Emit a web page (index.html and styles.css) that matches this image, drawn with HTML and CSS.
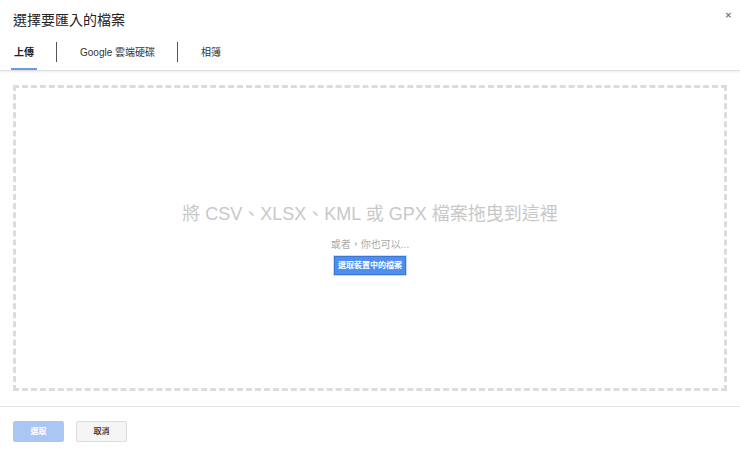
FILE: index.html
```html
<!doctype html>
<html>

<head>
    <title>選擇要匯入的檔案</title>
    <meta charset="utf-8">
    <link rel="stylesheet" href="styles.css">
</head>

<body>
    <div class="dialog">
        <div class="head">
            <h1 class="title">選擇要匯入的檔案</h1>
            <span class="close">&#x2715;</span>
            <div class="tabs">
                <span class="tab active">上傳</span>
                <span class="sep"></span>
                <span class="tab">Google 雲端硬碟</span>
                <span class="sep"></span>
                <span class="tab">相簿</span>
            </div>
        </div>
        <div class="body">
            <div class="drop">
                <div class="drop-title">將 CSV、XLSX、KML 或 GPX 檔案拖曳到這裡</div>
                <div class="drop-or">或者，你也可以...</div>
                <span class="pick">選取裝置中的檔案</span>
            </div>
        </div>
        <div class="foot">
            <span class="btn btn-primary">選取</span>
            <span class="btn">取消</span>
        </div>
    </div>
</body>

</html>
```

FILE: styles.css
```css
* {
    box-sizing: border-box;
}

body {
    margin: 0;
    background: #fff;
    font-family: "Liberation Sans", Arial, "Noto Sans CJK TC", sans-serif;
    color: #222;
}

.head {
    position: relative;
    padding: 10px 13px 0 11px;
    border-bottom: 1px solid #e0e0e0;
    box-shadow: 0 1px 2px rgba(0, 0, 0, 0.08);
}

.title {
    margin: 0 0 0 2px;
    font-size: 14px;
    line-height: 20px;
    font-weight: normal;
    color: #222;
}

.close {
    position: absolute;
    top: 11px;
    right: 8px;
    font-size: 8px;
    font-weight: bold;
    color: #777;
}

.tabs {
    display: flex;
    align-items: flex-start;
    margin-top: 13px;
}

.tab {
    font-size: 10px;
    line-height: 20px;
    padding: 0 3px 5px;
    border-bottom: 2px solid transparent;
    color: #333;
}

.tab.active {
    font-weight: bold;
    color: #222;
    border-bottom-color: #6d9be0;
}

.sep {
    width: 1px;
    height: 20px;
    margin: -1px 20px 0 19px;
    background: #555;
}

.body {
    padding: 14px 13px 15px;
}

.drop {
    height: 306px;
    border: 3px dashed #dcdcdc;
    display: flex;
    flex-direction: column;
    align-items: center;
    justify-content: center;
}

.drop-title {
    font-size: 18px;
    line-height: 24px;
    color: #c8c8c8;
}

.drop-or {
    margin-top: 12px;
    font-size: 10px;
    line-height: 14px;
    color: #aaa;
}

.pick {
    margin-top: 4px;
    width: 72px;
    height: 19px;
    line-height: 17px;
    text-align: center;
    font-size: 8px;
    font-weight: bold;
    color: #fff;
    background: #4d8ef0;
    border: 1px solid #3a75d8;
    box-shadow: 0 0 0 1px #c9dcf8;
}

.foot {
    display: flex;
    gap: 12px;
    padding: 14px 13px;
    border-top: 1px solid #e5e5e5;
}

.btn {
    width: 51px;
    height: 21px;
    line-height: 19px;
    text-align: center;
    font-size: 8px;
    font-weight: bold;
    color: #444;
    background: #f5f5f5;
    border: 1px solid #dcdcdc;
    border-radius: 2px;
}

.btn-primary {
    background: #a9c6f5;
    border-color: #a9c6f5;
    color: #fff;
}
```
